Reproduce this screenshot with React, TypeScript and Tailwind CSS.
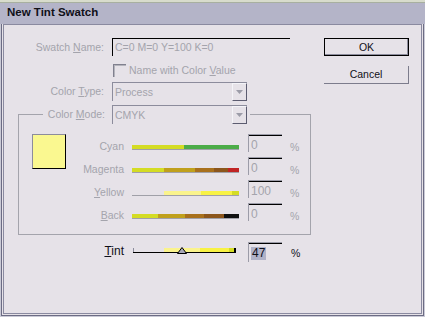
import React from "react";

const FONT = { fontFamily: '"Liberation Sans", Arial, sans-serif' };

type Seg = { cls: string };

// colour runs of each ink bar, left to right (total 107px)
const ROWS: { label: React.ReactNode; value: string; segs: Seg[] }[] = [
  {
    label: "Cyan",
    value: "0",
    segs: [{ cls: "w-[52px] bg-[#d4dc24]" }, { cls: "w-[55px] bg-[#4cac48]" }],
  },
  {
    label: "Magenta",
    value: "0",
    segs: [
      { cls: "w-[32px] bg-[#d4dc24]" },
      { cls: "w-[31px] bg-[#c0a01c]" },
      { cls: "w-[19px] bg-[#a8701c]" },
      { cls: "w-[14px] bg-[#8c561c]" },
      { cls: "w-[11px] bg-[#c02424]" },
    ],
  },
  {
    label: (
      <>
        <u className="underline-offset-1">Y</u>ellow
      </>
    ),
    value: "100",
    segs: [
      { cls: "w-[32px] bg-transparent" },
      { cls: "w-[37px] bg-[#faf38c]" },
      { cls: "w-[31px] bg-[#f8f244]" },
      { cls: "w-[7px] bg-[#d4dc24]" },
    ],
  },
  {
    label: (
      <>
        <u className="underline-offset-1">B</u>ack
      </>
    ),
    value: "0",
    segs: [
      { cls: "w-[26px] bg-[#d4dc24]" },
      { cls: "w-[27px] bg-[#c0a01c]" },
      { cls: "w-[19px] bg-[#a8701c]" },
      { cls: "w-[20px] bg-[#8c561c]" },
      { cls: "w-[15px] bg-[#101010]" },
    ],
  },
];

function Select({ value }: { value: string }) {
  return (
    <div className="flex w-[135px] h-[19px] border-t border-l border-[#8c8c9c] bg-[#e6e2e8]">
      <div className="flex-1 pl-[2px] flex items-center text-[#a4a4ac]">{value}</div>
      <div className="w-[15px] flex items-center justify-center border-r border-b border-[#5c5c70] border-t border-l border-t-[#f4f4f8] border-l-[#f4f4f8]">
        <svg width="7" height="4" viewBox="0 0 7 4">
          <path d="M0 0h7L3.5 4z" fill="#9c9ca8" />
        </svg>
      </div>
    </div>
  );
}

function NumBox({ value, h = "h-[18px]" }: { value: React.ReactNode; h?: string }) {
  return (
    <div
      className={`w-[34px] ${h} border-t border-l border-[#9c9ca8] shadow-[inset_0_1px_0_#000] pl-[2px] pt-[2px] flex items-center text-[12px] text-[#a4a4ac]`}
    >
      {value}
    </div>
  );
}

export default function App() {
  return (
    <div className="w-[425px] h-[317px] bg-[#e6e2e8] text-[10.5px] leading-none overflow-hidden" style={FONT}>
      {/* title bar */}
      <div className="h-[24px] border-t-2 border-[#d8dccc] bg-[#b4b4c8] flex items-center pl-[7px] pb-[1px] shadow-[inset_0_1px_0_#a8b0a0]">
        <span className="text-[11.5px] font-bold text-[#101018]">New Tint Swatch</span>
      </div>

      {/* window frame */}
      <div className="h-[293px] border-x border-b border-[#cacad6]">
        <div className="h-full border-x border-b border-[#6c6c84]">
          <div className="h-full border-x border-b border-[#e6e2e8]">
            <div className="h-full border border-[#8a8aa0] flex">
              {/* left column */}
              <div className="w-[320px] pt-[13px]">
                <div className="flex items-center h-[18px]">
                  <div className="w-[100px] text-right text-[#a4a4ac]">
                    Swatch <u className="underline-offset-1">N</u>ame:
                  </div>
                  <div className="ml-[8px] w-[178px] h-[18px] border-t border-l border-black pl-[2px] flex items-center text-[#a4a4ac]">
                    C=0 M=0 Y=100 K=0
                  </div>
                </div>

                <div className="mt-[7px] h-[14px] flex items-center pl-[109px]">
                  <div className="w-[13px] h-[13px] border-t border-l border-[#80808e] shadow-[inset_1px_1px_0_#b4b4bc]" />
                  <span className="ml-[3px] text-[#a4a4ac]">
                    Name with Color <u className="underline-offset-1">V</u>alue
                  </span>
                </div>

                <div className="mt-[5px] flex items-center h-[19px]">
                  <div className="w-[100px] text-right text-[#a4a4ac]">
                    Color <u className="underline-offset-1">T</u>ype:
                  </div>
                  <div className="ml-[8px]">
                    <Select value="Process" />
                  </div>
                </div>

                <fieldset className="mt-[4px] ml-[14px] w-[293px] border border-[#a4a4ac]">
                  <legend className="ml-[24px] pl-[4px] pr-[3px] flex items-center h-[19px]">
                    <span className="w-[58px] text-right text-[#a4a4ac]">
                      Color <u className="underline-offset-1">M</u>ode:
                    </span>
                    <span className="ml-[7px]">
                      <Select value="CMYK" />
                    </span>
                  </legend>
                  <div className="flex pl-[13px] pt-[10px] pb-[8px]">
                    <div className="w-[34px] h-[35px] bg-[#faf890] border border-t-[#8c8c9c] border-l-[#8c8c9c] border-r-black border-b-black" />
                    <div className="flex flex-col">
                      {ROWS.map((r, i) => (
                        <div key={i} className="h-[23px] flex items-center">
                          <div className="w-[58px] text-right text-[#a4a4ac] pt-[2px]">{r.label}</div>
                          <div className="ml-[8px] w-[107px] flex flex-col pt-[3px]">
                            <div className="flex h-[4px]">
                              {r.segs.map((s, j) => (
                                <div key={j} className={s.cls} />
                              ))}
                            </div>
                            <div className="h-[1px] bg-[#a0a0a8]" />
                          </div>
                          <div className="ml-[9px] self-start">
                            <NumBox value={r.value} />
                          </div>
                          <div className="ml-[8px] text-[#a4a4ac] pt-[3px]">%</div>
                        </div>
                      ))}
                    </div>
                  </div>
                </fieldset>

                {/* tint row */}
                <div className="mt-[7px] h-[20px] flex items-center">
                  <div className="w-[120px] text-right text-[12px] text-[#101018] pb-[2px]">
                    <u className="underline-offset-1">T</u>int
                  </div>
                  <div className="ml-[9px] w-[103px] relative flex flex-col pb-[3px]">
                    <div className="flex h-[4px]">
                      <div className="w-[31px] border-l border-[#8c8c9c]" />
                      <div className="w-[36px] bg-[#faf38c]" />
                      <div className="w-[29px] bg-[#f8f244]" />
                      <div className="w-[5px] bg-[#d4dc24]" />
                      <div className="w-[2px] bg-black" />
                    </div>
                    <div className="h-[1px] bg-black" />
                    <svg className="absolute left-[44px] top-[-1px]" width="10" height="7" viewBox="0 0 10 7">
                      <path d="M5 0.5L9.5 6.5H0.5z" fill="#a8a8b8" stroke="#000" strokeWidth="1" />
                    </svg>
                  </div>
                  <div className="ml-[12px]">
                    <NumBox
                      h="h-[20px]"
                      value={<span className="bg-[#b0b2c8] text-[#101018] px-[1px] leading-[13px]">47</span>}
                    />
                  </div>
                  <div className="ml-[9px] text-[#101018] pt-[3px]">%</div>
                </div>
              </div>

              {/* buttons */}
              <div className="pt-[13px] flex flex-col">
                <div className="w-[85px] h-[18px] border border-black shadow-[inset_-1px_-1px_0_#8c8c9c] flex items-center justify-center text-[#101018]">
                  OK
                </div>
                <div className="mt-[10px] w-[85px] h-[18px] border-r border-b border-[#7c7c8c] flex items-center justify-center text-[#101018]">
                  Cancel
                </div>
              </div>
            </div>
          </div>
        </div>
      </div>
    </div>
  );
}
